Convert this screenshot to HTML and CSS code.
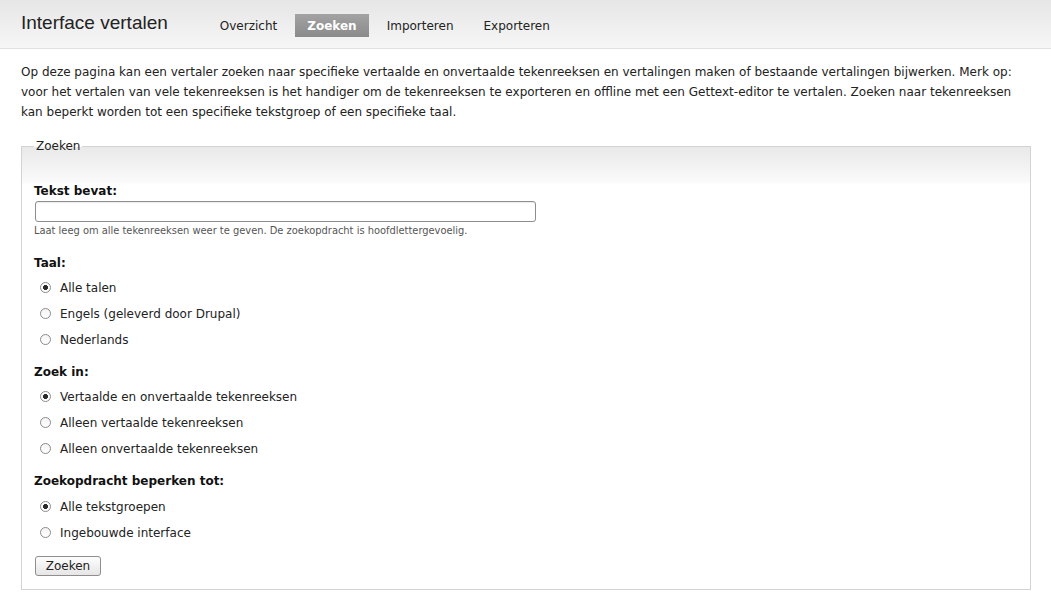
FILE: index.html
```html
<!DOCTYPE html>
<html lang="nl">
<head>
<meta charset="utf-8">
<title>Interface vertalen</title>
<link rel="stylesheet" href="styles.css">
</head>
<body>
<header class="header">
  <h1 class="title">Interface vertalen</h1>
  <ul class="tabs">
    <li class="tab">Overzicht</li>
    <li class="tab active">Zoeken</li>
    <li class="tab">Importeren</li>
    <li class="tab">Exporteren</li>
  </ul>
</header>
<main class="content">
  <p class="intro">Op deze pagina kan een vertaler zoeken naar specifieke vertaalde en onvertaalde tekenreeksen en vertalingen maken of bestaande vertalingen bijwerken. Merk op: voor het vertalen van vele tekenreeksen is het handiger om de tekenreeksen te exporteren en offline met een Gettext-editor te vertalen. Zoeken naar tekenreeksen kan beperkt worden tot een specifieke tekstgroep of een specifieke taal.</p>
  <fieldset class="box">
    <legend class="legend">Zoeken</legend>
    <div class="item first">
      <label class="label" for="q">Tekst bevat:</label>
      <input class="text" id="q" type="text">
      <div class="desc">Laat leeg om alle tekenreeksen weer te geven. De zoekopdracht is hoofdlettergevoelig.</div>
    </div>
    <div class="item">
      <div class="label">Taal:</div>
      <label class="option"><input class="radio" type="radio" name="taal" checked>Alle talen</label>
      <label class="option"><input class="radio" type="radio" name="taal">Engels (geleverd door Drupal)</label>
      <label class="option"><input class="radio" type="radio" name="taal">Nederlands</label>
    </div>
    <div class="item">
      <div class="label">Zoek in:</div>
      <label class="option"><input class="radio" type="radio" name="in" checked>Vertaalde en onvertaalde tekenreeksen</label>
      <label class="option"><input class="radio" type="radio" name="in">Alleen vertaalde tekenreeksen</label>
      <label class="option"><input class="radio" type="radio" name="in">Alleen onvertaalde tekenreeksen</label>
    </div>
    <div class="item last">
      <div class="label">Zoekopdracht beperken tot:</div>
      <label class="option"><input class="radio" type="radio" name="grp" checked>Alle tekstgroepen</label>
      <label class="option"><input class="radio" type="radio" name="grp">Ingebouwde interface</label>
    </div>
    <button class="button" type="button">Zoeken</button>
  </fieldset>
</main>
</body>
</html>
```
FILE: styles.css
```css
* { box-sizing: border-box; }
html, body { margin: 0; padding: 0; background: #fff; }
body {
  font-family: "DejaVu Sans", Verdana, sans-serif;
  font-size: 12px;
  color: #222;
}
.header {
  height: 49px;
  display: flex;
  align-items: flex-start;
  padding: 0 21px;
  background: linear-gradient(#e6e6e6, #f6f6f6);
  border-bottom: 1px solid #e0e0e0;
}
.title {
  margin: 11px 0 0 0;
  font-family: "Liberation Sans", Arial, sans-serif;
  font-weight: normal;
  font-size: 19px;
  line-height: 24px;
  color: #222;
}
.tabs {
  list-style: none;
  margin: 14px 0 0 40px;
  padding: 0;
  display: flex;
  gap: 6px;
}
.tab {
  padding: 0 12px;
  line-height: 24px;
  height: 23px;
  color: #222;
}
.tab.active {
  background: linear-gradient(#a3a3a3, #8a8a8a);
  color: #fff;
  font-weight: bold;
}
.content { padding: 0 20px 0 21px; }
.intro {
  margin: 13px 0 17px 0;
  line-height: 20px;
  color: #222;
}
.box {
  margin: 0;
  border: 1px solid #d3d3d3;
  padding: 0 13px 13px 12px;
  background: linear-gradient(#e9e9e9, #fbfbfb 36px, #fff 37px);
  min-width: 0;
}
.legend {
  padding: 0 2px;
  line-height: 14px;
  color: #222;
}
.item.first { margin-top: 28px; }
.item + .item { margin-top: 15px; }
.item + .item + .item { margin-top: 9px; }
.label {
  display: block;
  font-weight: bold;
  line-height: 20px;
  margin-bottom: 2px;
  color: #111;
}
.item.first .label { margin-bottom: 0; }
.item.last .label { margin-bottom: 3px; }
.text {
  display: block;
  width: 501px;
  height: 21px;
  margin: 0 0 0 1px;
  border: 1px solid #8e8e8e;
  border-radius: 3px;
  background: #fff;
  box-shadow: inset 0 1px 1px rgba(0,0,0,0.08);
}
.desc {
  font-size: 9.9px;
  line-height: 14px;
  margin-top: 2px;
  color: #555;
}
.option {
  display: flex;
  align-items: center;
  height: 26px;
  line-height: 26px;
  color: #222;
}
.radio {
  -webkit-appearance: none;
  appearance: none;
  width: 11px;
  height: 11px;
  margin: -2px 9px 0 6px;
  border: 1px solid #8a8a8a;
  border-radius: 50%;
  background: linear-gradient(#f4f4f4, #fff);
  flex: none;
}
.radio:checked {
  background: radial-gradient(circle, #2a2a2a 0, #2a2a2a 2.2px, #fff 2.8px);
}
.button {
  display: block;
  margin: 10px 0 0 1px;
  width: 66px;
  height: 20px;
  padding: 0;
  font-family: "DejaVu Sans", Verdana, sans-serif;
  font-size: 12px;
  color: #222;
  border: 1px solid #8e8e8e;
  border-radius: 3px;
  background: linear-gradient(#fdfdfd, #e6e6e6);
}
```
